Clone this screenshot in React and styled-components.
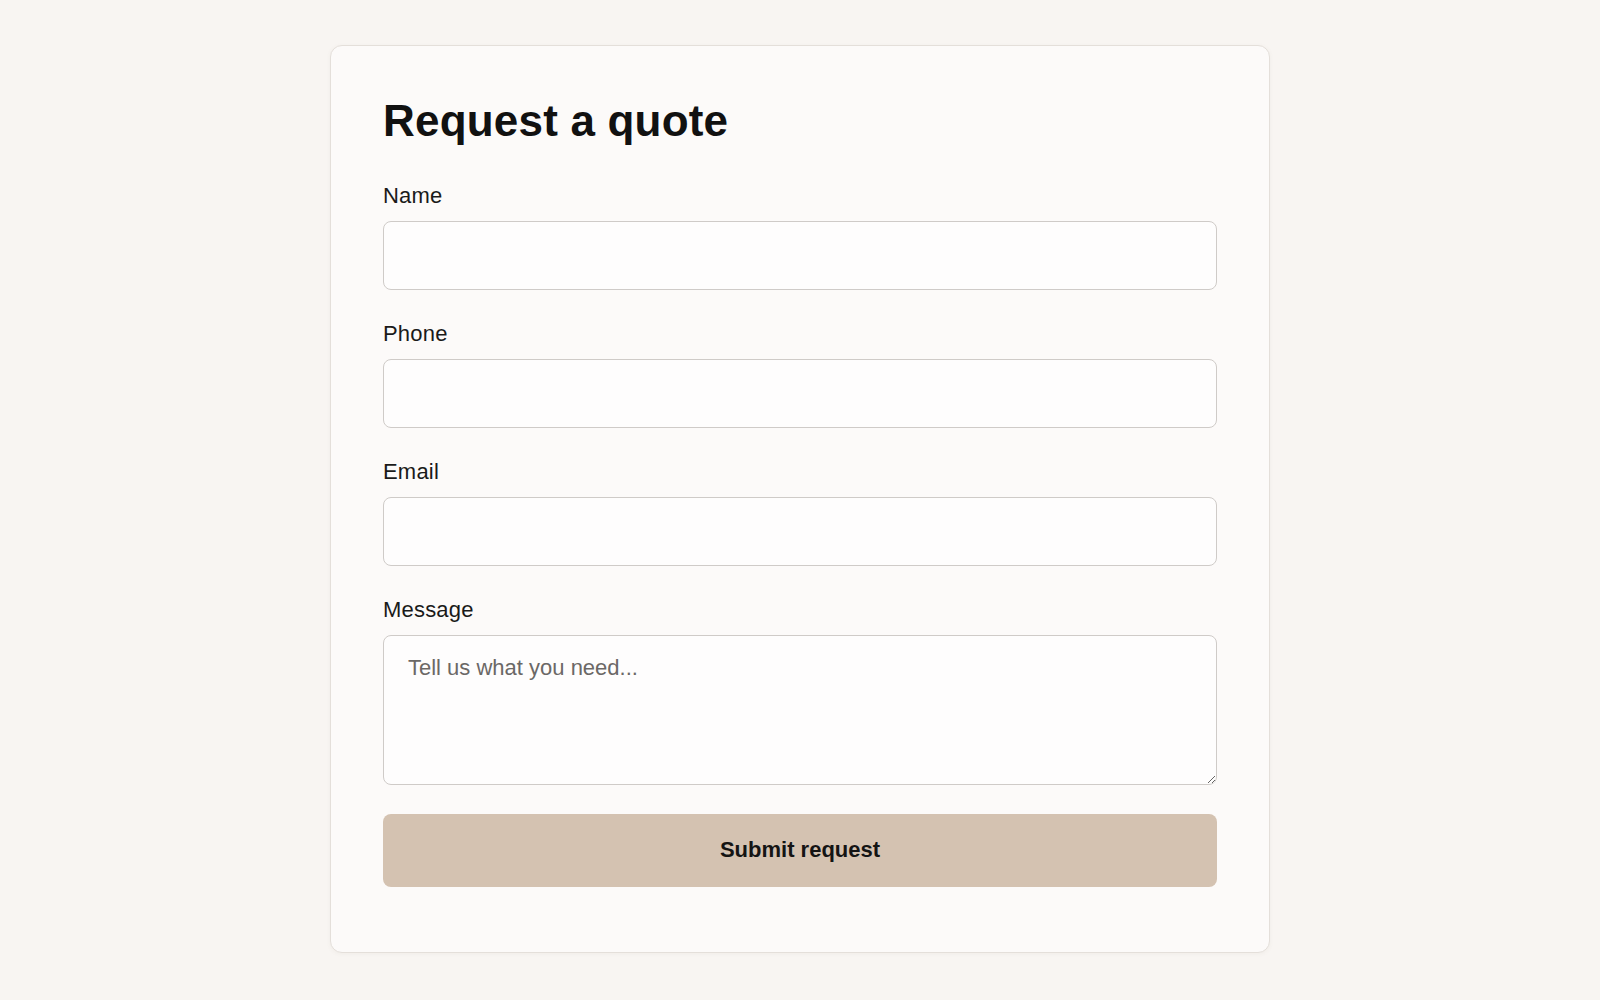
import React, { useState } from 'react';
import styled, { createGlobalStyle } from 'styled-components';

const GlobalStyle = createGlobalStyle`
  * {
    box-sizing: border-box;
  }
  body {
    margin: 0;
    background: #f8f5f2;
    font-family: 'Liberation Sans', Arial, sans-serif;
    color: #141414;
  }
`;

const QuotePage = () => {
  const [form, setForm] = useState({ name: '', phone: '', email: '', message: '' });

  const handleChange = (e) => {
    setForm({ ...form, [e.target.name]: e.target.value });
  };

  const handleSubmit = (e) => {
    e.preventDefault();
  };

  return (
    <Page>
      <GlobalStyle />
      <Card>
        <Title>Request a quote</Title>
        <Form onSubmit={handleSubmit}>
          <Field>
            <Label htmlFor='name'>Name</Label>
            <Input id='name' name='name' type='text' value={form.name} onChange={handleChange} />
          </Field>
          <Field>
            <Label htmlFor='phone'>Phone</Label>
            <Input id='phone' name='phone' type='tel' value={form.phone} onChange={handleChange} />
          </Field>
          <Field>
            <Label htmlFor='email'>Email</Label>
            <Input id='email' name='email' type='email' value={form.email} onChange={handleChange} />
          </Field>
          <Field>
            <Label htmlFor='message'>Message</Label>
            <TextArea
              id='message'
              name='message'
              placeholder='Tell us what you need...'
              value={form.message}
              onChange={handleChange}
            />
          </Field>
          <SubmitButton type='submit'>Submit request</SubmitButton>
        </Form>
      </Card>
    </Page>
  );
};

const Page = styled.div`
  min-height: 1000px;
  display: flex;
  justify-content: center;
  align-items: flex-start;
  padding-top: 45px;
`;

const Card = styled.div`
  width: 940px;
  background: #fcfaf9;
  border: 1px solid #e4dfda;
  border-radius: 12px;
  box-shadow: 0 1px 4px rgba(120, 100, 80, 0.06);
  padding: 49px 52px 65px;
`;

const Title = styled.h1`
  margin: 0 0 34px;
  font-size: 44px;
  line-height: 1.2;
  font-weight: 700;
  color: #111;
  letter-spacing: 0.2px;
`;

const Form = styled.form`
  display: flex;
  flex-direction: column;
  gap: 30px;
`;

const Field = styled.div`
  display: flex;
  flex-direction: column;
`;

const Label = styled.label`
  font-size: 22px;
  line-height: 27px;
  color: #1a1a1a;
  margin-bottom: 12px;
  letter-spacing: 0.2px;
`;

const Input = styled.input`
  height: 69px;
  width: 100%;
  padding: 0 24px;
  font-family: inherit;
  font-size: 22px;
  color: #1a1a1a;
  background: #fefdfd;
  border: 1px solid #cfcbc8;
  border-radius: 8px;
  outline: none;
`;

const TextArea = styled.textarea`
  display: block;
  height: 150px;
  width: 100%;
  padding: 17px 24px 12px;
  font-family: inherit;
  font-size: 22px;
  line-height: 1.4;
  color: #1a1a1a;
  background: #fefdfd;
  border: 1px solid #cfcbc8;
  border-radius: 8px;
  outline: none;
  resize: vertical;

  &::placeholder {
    color: #6b6866;
  }
`;

const SubmitButton = styled.button`
  height: 73px;
  margin-top: -1px;
  width: 100%;
  border: none;
  border-radius: 8px;
  background: #d4c2b1;
  color: #141414;
  font-family: inherit;
  font-size: 22px;
  font-weight: 700;
  cursor: pointer;
`;

export default QuotePage;
